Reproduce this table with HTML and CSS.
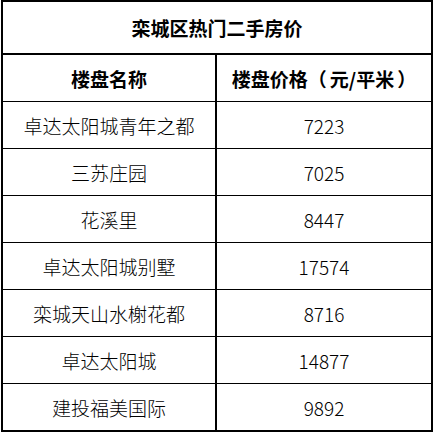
FILE: index.html
```html
<!DOCTYPE html>
<html lang="zh-CN">
<head>
<meta charset="utf-8">
<title>栾城区热门二手房价</title>
<link rel="stylesheet" href="styles.css">
</head>
<body>
<div class="price-table">
  <div class="title">栾城区热门二手房价</div>
  <div class="cell c1 head">楼盘名称</div>
  <div class="cell c2 head">楼盘价格<span class="lp">（</span>元/平米<span class="rp">）</span></div>
  <div class="cell c1">卓达太阳城青年之都</div>
  <div class="cell c2">7223</div>
  <div class="cell c1">三苏庄园</div>
  <div class="cell c2">7025</div>
  <div class="cell c1">花溪里</div>
  <div class="cell c2">8447</div>
  <div class="cell c1">卓达太阳城别墅</div>
  <div class="cell c2">17574</div>
  <div class="cell c1">栾城天山水榭花都</div>
  <div class="cell c2">8716</div>
  <div class="cell c1">卓达太阳城</div>
  <div class="cell c2">14877</div>
  <div class="cell c1 last">建投福美国际</div>
  <div class="cell c2 last">9892</div>
</div>
</body>
</html>
```

FILE: styles.css
```css
html, body {
  margin: 0;
  padding: 0;
  background: #fff;
}

body {
  font-family: "Noto Sans CJK SC", "Noto Sans", sans-serif;
  color: #000;
}

.price-table {
  box-sizing: border-box;
  width: 432px;
  margin-left: 1px;
  border: 2px solid #000;
  display: grid;
  grid-template-columns: 214px 1fr;
}

.title {
  grid-column: 1 / -1;
  height: 51px;
  border-bottom: 2px solid #000;
  display: flex;
  align-items: center;
  justify-content: center;
  font-size: 19px;
  font-weight: 700;
}

.cell {
  box-sizing: border-box;
  height: 47px;
  border-bottom: 1px solid #000;
  display: flex;
  align-items: center;
  justify-content: center;
  font-size: 19px;
  font-weight: 300;
}

.cell.c1 {
  border-right: 2px solid #000;
}

.cell.head {
  font-weight: 700;
}

.lp {
  margin-right: 3px;
}

.rp {
  margin-left: 3px;
}

.cell.last {
  height: 46px;
  border-bottom: none;
}
```
